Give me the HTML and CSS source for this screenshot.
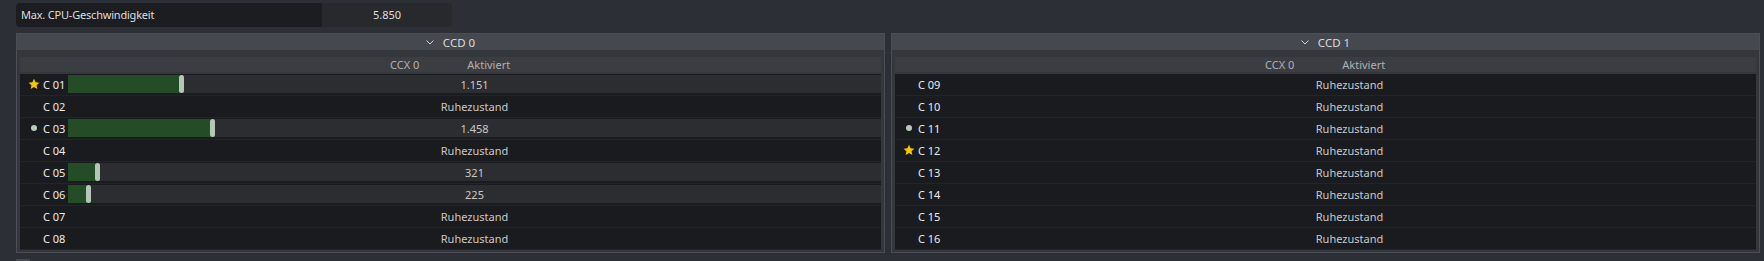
FILE: index.html
```html
<!DOCTYPE html>
<html lang="de">
<head>
    <meta charset="UTF-8">
    <title>CPU Kerne</title>
    <link rel="stylesheet" href="styles.css">
</head>
<body>
    <!-- Max speed bar -->
    <div class="topbar">
        <div class="topbar-label">Max. CPU-Geschwindigkeit</div>
        <div class="topbar-value">5.850</div>
    </div>

    <div class="panels">
        <!-- CCD 0 -->
        <div class="panel">
            <div class="panel-head">
                <svg class="chevron" width="8" height="5" viewBox="0 0 8 5"><polyline points="0.5,0.5 4,4 7.5,0.5" fill="none" stroke="#d0d0d0" stroke-width="1"/></svg>
                <span>CCD 0</span>
            </div>
            <div class="panel-body">
                <div class="table-head"><span class="th-ccx">CCX 0</span><span class="th-state">Aktiviert</span></div>
                <div class="row">
                    <span class="icon"><svg width="12" height="12" viewBox="0 0 24 24"><path d="M12 1.5l3.2 7 7.6.8-5.7 5.1 1.6 7.5L12 18l-6.7 3.9 1.6-7.5L1.2 9.3l7.6-.8z" fill="#f6c700"/></svg></span>
                    <span class="label">C 01</span>
                    <div class="track"><div class="fill" style="width:116px"></div><span class="value">1.151</span></div>
                </div>
                <div class="row">
                    <span class="icon"></span>
                    <span class="label">C 02</span>
                    <div class="track idle"><span class="value">Ruhezustand</span></div>
                </div>
                <div class="row">
                    <span class="icon"><span class="dot"></span></span>
                    <span class="label">C 03</span>
                    <div class="track"><div class="fill" style="width:147px"></div><span class="value">1.458</span></div>
                </div>
                <div class="row">
                    <span class="icon"></span>
                    <span class="label">C 04</span>
                    <div class="track idle"><span class="value">Ruhezustand</span></div>
                </div>
                <div class="row">
                    <span class="icon"></span>
                    <span class="label">C 05</span>
                    <div class="track"><div class="fill" style="width:32px"></div><span class="value">321</span></div>
                </div>
                <div class="row">
                    <span class="icon"></span>
                    <span class="label">C 06</span>
                    <div class="track"><div class="fill" style="width:23px"></div><span class="value">225</span></div>
                </div>
                <div class="row">
                    <span class="icon"></span>
                    <span class="label">C 07</span>
                    <div class="track idle"><span class="value">Ruhezustand</span></div>
                </div>
                <div class="row">
                    <span class="icon"></span>
                    <span class="label">C 08</span>
                    <div class="track idle"><span class="value">Ruhezustand</span></div>
                </div>
            </div>
        </div>

        <!-- CCD 1 -->
        <div class="panel">
            <div class="panel-head">
                <svg class="chevron" width="8" height="5" viewBox="0 0 8 5"><polyline points="0.5,0.5 4,4 7.5,0.5" fill="none" stroke="#d0d0d0" stroke-width="1"/></svg>
                <span>CCD 1</span>
            </div>
            <div class="panel-body">
                <div class="table-head"><span class="th-ccx">CCX 0</span><span class="th-state">Aktiviert</span></div>
                <div class="row">
                    <span class="icon"></span>
                    <span class="label">C 09</span>
                    <div class="track idle"><span class="value">Ruhezustand</span></div>
                </div>
                <div class="row">
                    <span class="icon"></span>
                    <span class="label">C 10</span>
                    <div class="track idle"><span class="value">Ruhezustand</span></div>
                </div>
                <div class="row">
                    <span class="icon"><span class="dot"></span></span>
                    <span class="label">C 11</span>
                    <div class="track idle"><span class="value">Ruhezustand</span></div>
                </div>
                <div class="row">
                    <span class="icon"><svg width="12" height="12" viewBox="0 0 24 24"><path d="M12 1.5l3.2 7 7.6.8-5.7 5.1 1.6 7.5L12 18l-6.7 3.9 1.6-7.5L1.2 9.3l7.6-.8z" fill="#f6c700"/></svg></span>
                    <span class="label">C 12</span>
                    <div class="track idle"><span class="value">Ruhezustand</span></div>
                </div>
                <div class="row">
                    <span class="icon"></span>
                    <span class="label">C 13</span>
                    <div class="track idle"><span class="value">Ruhezustand</span></div>
                </div>
                <div class="row">
                    <span class="icon"></span>
                    <span class="label">C 14</span>
                    <div class="track idle"><span class="value">Ruhezustand</span></div>
                </div>
                <div class="row">
                    <span class="icon"></span>
                    <span class="label">C 15</span>
                    <div class="track idle"><span class="value">Ruhezustand</span></div>
                </div>
                <div class="row">
                    <span class="icon"></span>
                    <span class="label">C 16</span>
                    <div class="track idle"><span class="value">Ruhezustand</span></div>
                </div>
            </div>
        </div>
    </div>

    <div class="scroll-thumb"></div>
</body>
</html>
```

FILE: styles.css
```css
/* General reset */
* {
    margin: 0;
    padding: 0;
    box-sizing: border-box;
}

body {
    font-family: 'Noto Sans', 'Open Sans', sans-serif;
    font-size: 11px;
    color: #e4e4e4;
    background-color: #2c2f36;
    padding: 3px 4px 0 16px;
    height: 261px;
    overflow: hidden;
}

/* Top speed bar */
.topbar {
    display: flex;
    width: 436px;
    height: 24px;
    border-radius: 4px;
    overflow: hidden;
}

.topbar-label {
    width: 306px;
    background-color: #1b1d21;
    padding-left: 5px;
    line-height: 24px;
    color: #dedede;
    letter-spacing: -0.2px;
}

.topbar-value {
    flex: 1;
    background-color: #27292d;
    line-height: 24px;
    text-align: center;
    color: #dedede;
}

/* Panels */
.panels {
    display: flex;
    gap: 6px;
    margin-top: 6px;
}

.panel {
    flex: 1;
    border: 1px solid #4b4e56;
    background-color: #34373c;
}

.panel-head {
    height: 16px;
    background-color: #45484f;
    display: flex;
    justify-content: center;
    align-items: center;
    gap: 9px;
    color: #dcdcdc;
    font-size: 11.5px;
}

.chevron {
    margin-top: 1px;
}

.panel-body {
    padding: 7px 3px 2px 3px;
}

.table-head {
    height: 15px;
    background-color: #3b3d42;
    color: #b0b0b0;
    display: flex;
    align-items: center;
    padding-left: 370px;
    margin-bottom: 2px;
}

.th-state {
    margin-left: 48px;
}

/* Rows */
.row {
    display: flex;
    align-items: center;
    height: 22px;
    background-color: #1a1b1e;
    border-bottom: 1px solid #222428;
    padding-bottom: 1px;
}

.icon {
    width: 13px;
    margin-left: 7px;
    margin-right: 3px;
    display: flex;
    align-items: center;
    justify-content: center;
}

.dot {
    width: 6px;
    height: 6px;
    border-radius: 50%;
    background-color: #b9c9bb;
}

.label {
    width: 25px;
    color: #ececec;
}

.track {
    flex: 1;
    height: 18px;
    display: grid;
    background-color: #2c2d31;
}

.track.idle {
    background-color: transparent;
}

.fill,
.value {
    grid-area: 1 / 1;
}

.fill {
    height: 18px;
    background-color: #234c27;
    display: flex;
    justify-content: flex-end;
}

.fill::after {
    content: "";
    width: 5px;
    height: 18px;
    border-radius: 3px;
    background-color: #b6c7b8;
}

.value {
    justify-self: center;
    align-self: center;
    color: #c9c9c9;
}

.scroll-thumb {
    width: 14px;
    height: 10px;
    margin-top: 6px;
    background-color: #45484f;
}
```
